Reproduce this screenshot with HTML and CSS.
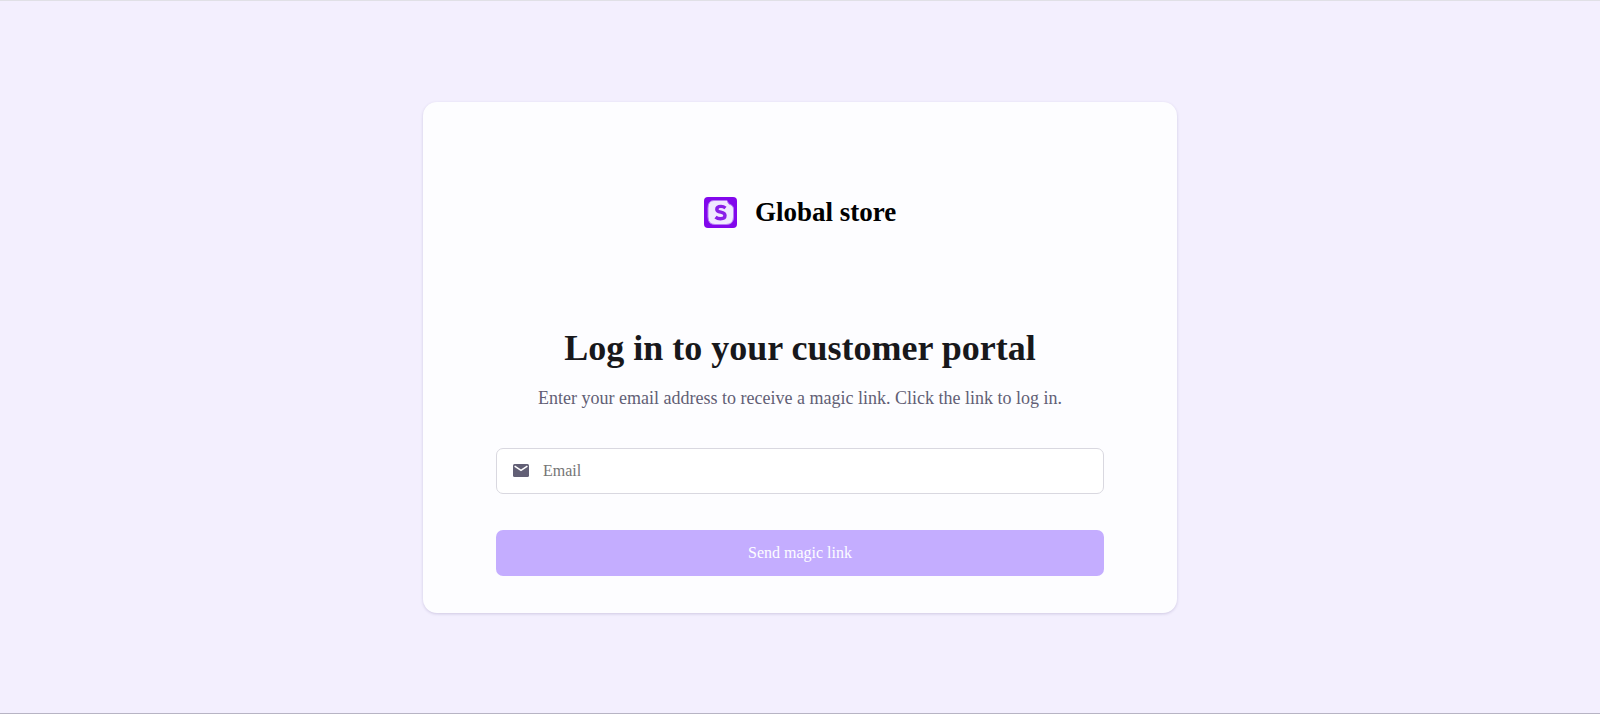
FILE: index.html
```html
<!DOCTYPE html>
<html lang="en">
<head>
<meta charset="utf-8">
<meta name="viewport" content="width=device-width, initial-scale=1">
<title>Global store</title>
<link rel="stylesheet" href="styles.css">
</head>
<body>
<main class="page">
  <section class="card">
    <header class="brand">
      <svg class="brand-logo" viewBox="0 0 33 31" aria-hidden="true">
        <rect width="33" height="31" rx="4" fill="#8207ec"/>
        <path d="M10 3.500H23Q24 7.500 28 8.500Q29.500 10 29.500 12V20Q29.500 27.500 22 27.500H11Q4 27.500 4 20V11Q4 3.500 10 3.500Z" fill="#f0e9ff" stroke="#b67af6" stroke-width="1"/>
        <path d="M21.500 11Q19.500 9.400 17 9.400Q12.800 9.400 12.800 12.300Q12.800 14.500 16.800 15.200Q21 16 21 18.600Q21 21.800 16.500 21.800Q13.500 21.800 11.500 20.200" fill="none" stroke="#8a1fe8" stroke-width="3.400"/>
      </svg>
      <span class="brand-name">Global store</span>
    </header>
    <h1 class="title">Log in to your customer portal</h1>
    <p class="subtitle">Enter your email address to receive a magic link. Click the link to log in.</p>
    <form class="form">
      <label class="field">
        <svg class="field-icon" viewBox="0 0 16 13" aria-hidden="true">
          <rect width="16" height="13" rx="1.500" fill="#625f75"/>
          <path d="M1.600 2.200L8 6.400L14.400 2.200" fill="none" stroke="#fff" stroke-width="1.600"/>
        </svg>
        <input class="field-input" type="email" placeholder="Email" aria-label="Email">
      </label>
      <button class="submit" type="submit">Send magic link</button>
    </form>
  </section>
</main>
</body>
</html>
```
FILE: styles.css
```css
* {
  box-sizing: border-box;
}

body {
  margin: 0;
  font-family: "Liberation Serif", "Times New Roman", serif;
  background: #f3effe;
}

.page {
  display: flex;
  align-items: center;
  justify-content: center;
  min-height: 100vh;
  border-top: 1px solid #e0e0e6;
  border-bottom: 1px solid #b7b4c4;
}

.card {
  width: 100%;
  max-width: 754px;
  padding: 80px 73px 37px;
  border-radius: 14px;
  background: #fdfdff;
  box-shadow: 0 1px 3px rgba(70, 50, 120, 0.2);
}

.brand {
  display: flex;
  align-items: center;
  justify-content: center;
  gap: 18px;
  height: 62px;
}

.brand-logo {
  width: 33px;
  height: 31px;
}

.brand-name {
  padding-bottom: 2px;
  font-size: 27px;
  line-height: 32px;
  font-weight: 700;
  color: #000;
}

.title {
  margin: 82px 0 0;
  font-size: 36px;
  line-height: 44px;
  font-weight: 700;
  text-align: center;
  color: #18181b;
}

.subtitle {
  margin: 14px 0 0;
  font-size: 18px;
  line-height: 28px;
  text-align: center;
  color: #625f75;
}

.form {
  display: flex;
  flex-direction: column;
  gap: 36px;
  margin-top: 36px;
}

.field {
  display: flex;
  align-items: center;
  gap: 14px;
  height: 46px;
  padding: 0 16px;
  border: 1px solid #d9d8e0;
  border-radius: 7px;
  background: #fff;
}

.field-icon {
  flex: none;
  width: 16px;
  height: 13px;
}

.field-input {
  flex: 1;
  min-width: 0;
  padding: 0;
  border: 0;
  outline: 0;
  background: transparent;
  font: inherit;
  font-size: 16px;
  color: #18181b;
}

.field-input::placeholder {
  color: #757575;
}

.submit {
  height: 46px;
  border: 0;
  border-radius: 7px;
  background: #c4adff;
  font: inherit;
  font-size: 16px;
  color: #fdfdff;
}
```
